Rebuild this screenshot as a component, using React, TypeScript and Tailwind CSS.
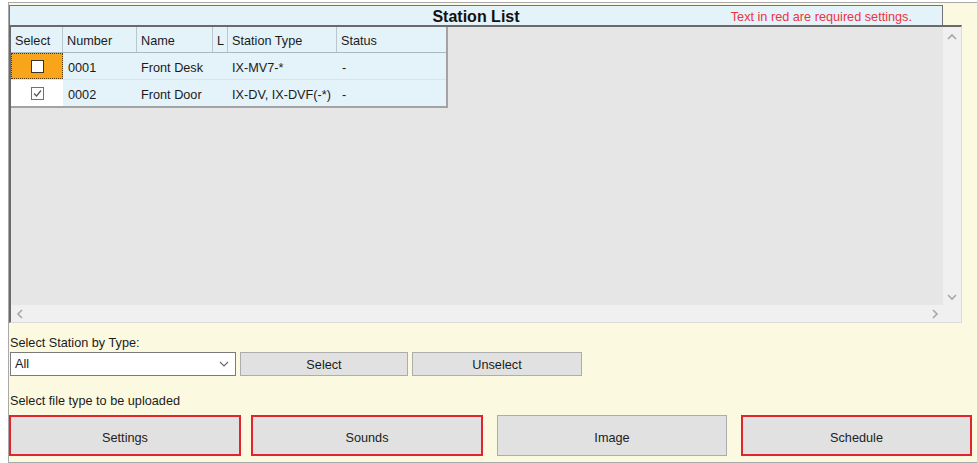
import React from "react";

const cols = [
  { key: "select", label: "Select", w: "w-[52px]" },
  { key: "number", label: "Number", w: "w-[74px]" },
  { key: "name", label: "Name", w: "w-[76px]" },
  { key: "loc", label: "L", w: "w-[15px]" },
  { key: "type", label: "Station Type", w: "w-[109px]" },
  { key: "status", label: "Status", w: "w-[109px]" },
];

const rows = [
  { number: "0001", name: "Front Desk", type: "IX-MV7-*", status: "-", checked: false, current: true },
  { number: "0002", name: "Front Door", type: "IX-DV, IX-DVF(-*)", status: "-", checked: true, current: false },
];

function Chevron({ dir }: { dir: "up" | "down" | "left" | "right" }) {
  const d =
    dir === "up"
      ? "M1 6 L5 2 L9 6"
      : dir === "down"
      ? "M1 2 L5 6 L9 2"
      : dir === "left"
      ? "M6 1 L2 5 L6 9"
      : "M2 1 L6 5 L2 9";
  const size = dir === "up" || dir === "down" ? "w-[10px] h-[8px]" : "w-[8px] h-[10px]";
  const vb = dir === "up" || dir === "down" ? "0 0 10 8" : "0 0 8 10";
  return (
    <svg viewBox={vb} className={size}>
      <path d={d} fill="none" stroke="#a6a6a6" strokeWidth="1.6" />
    </svg>
  );
}

function CheckBox({ checked, strong }: { checked: boolean; strong: boolean }) {
  return (
    <div
      className={`w-[13px] h-[13px] bg-white border flex items-center justify-center ${
        strong ? "border-[#333333]" : "border-[#707070]"
      }`}
    >
      {checked && (
        <svg viewBox="0 0 11 11" className="w-[11px] h-[11px]">
          <path d="M2 5.5 L4.5 8 L9 2.5" fill="none" stroke="#555555" strokeWidth="1.2" />
        </svg>
      )}
    </div>
  );
}

function BigButton({ label, required }: { label: string; required: boolean }) {
  return (
    <div
      className={`h-full flex items-center justify-center pt-[6px] bg-[#e1e1e1] text-[#222] ${
        required ? "border-2 border-[#e0252f]" : "border border-[#adadad]"
      }`}
    >
      {label}
    </div>
  );
}

export default function App() {
  return (
    <div className="w-[977px] h-[463px] bg-white pl-[8px] pt-[2px] font-['Liberation_Sans',Arial,sans-serif] text-[12.7px] text-[#1b1b1b] overflow-hidden">
      <div className="h-[461px] border-t border-l border-b border-[#a9a9a9] bg-[#fcf9e1] flex flex-col">
        {/* title band */}
        <div className="mt-[2px] w-[934px] h-[20px] border-t border-l border-r border-[#737373] bg-[#e4f2f9] grid grid-cols-[1fr_auto_1fr] items-center">
          <div />
          <div className="text-[16px] font-bold leading-[18px] pt-[2px] text-[#111]">Station List</div>
          <div className="justify-self-end pr-[30px] text-[#ee3340] leading-[14px] pt-[2px]">
            Text in red are required settings.
          </div>
        </div>

        {/* station grid */}
        <div className="w-[953px] h-[298px] border-t-2 border-l-2 border-[#6a6a6a] border-r border-b border-r-[#dadada] border-b-[#dadada] flex flex-col">
          <div className="flex flex-1 min-h-0">
            <div className="flex-1 bg-[#e6e6e6]">
              <div className="w-[437px] border-r-2 border-b-2 border-[#a3a3a3]">
                {/* header row */}
                <div className="flex h-[26px] bg-[#e4f2f9] border-b border-[#a9b9c2]">
                  {cols.map((c, i) => (
                    <div
                      key={c.key}
                      className={`${c.w} h-full flex items-center pt-[5px] overflow-hidden whitespace-nowrap pl-[4px] ${
                        i < cols.length - 1 ? "border-r border-[#b9c6cc]" : ""
                      }`}
                    >
                      {c.label}
                    </div>
                  ))}
                </div>
                {/* data rows */}
                {rows.map((r, idx) => (
                  <div
                    key={r.number}
                    className={`flex ${idx === 0 ? "h-[27px] border-b border-[#d6e6ee]" : "h-[26px]"} bg-[#e4f2f9]`}
                  >
                    <div
                      className={`w-[52px] h-full flex items-center justify-center ${
                        r.current
                          ? "bg-[#f8a51c] border border-dotted border-[#5a3a00]"
                          : "bg-white"
                      }`}
                    >
                      <CheckBox checked={r.checked} strong={r.current} />
                    </div>
                    <div className="w-[74px] pl-[5px] pt-[5px] flex items-center">{r.number}</div>
                    <div className="w-[76px] pl-[4px] pt-[5px] flex items-center">{r.name}</div>
                    <div className="w-[15px]" />
                    <div className="w-[109px] pl-[4px] pt-[5px] flex items-center whitespace-nowrap">{r.type}</div>
                    <div className="w-[109px] pl-[5px] pt-[5px] flex items-center">{r.status}</div>
                  </div>
                ))}
              </div>
            </div>
            <div className="w-[18px] bg-[#f0f0f0] flex flex-col items-center justify-between pt-[6px] pb-[4px]">
              <Chevron dir="up" />
              <Chevron dir="down" />
            </div>
          </div>
          <div className="h-[17px] flex bg-[#f0f0f0]">
            <div className="flex-1 flex items-center justify-between pl-[5px] pr-[22px]">
              <Chevron dir="left" />
              <Chevron dir="right" />
            </div>
          </div>
        </div>

        {/* type filter */}
        <div className="mt-[13px] h-[15px] leading-[15px] pl-[1px]">Select Station by Type:</div>
        <div className="mt-[1px] h-[24px] flex">
          <div className="ml-[1px] w-[226px] h-full bg-white border border-[#7a7a7a] flex items-center justify-between pl-[4px] pr-[6px]">
            <span className="pt-[2px]">All</span>
            <svg viewBox="0 0 10 6" className="w-[10px] h-[6px]">
              <path d="M1 1 L5 5 L9 1" fill="none" stroke="#6a6a6a" strokeWidth="1.2" />
            </svg>
          </div>
          <div className="ml-[4px] w-[168px] h-full pt-[3px] bg-[#e1e1e1] border border-[#adadad] flex items-center justify-center">
            Select
          </div>
          <div className="ml-[4px] w-[170px] h-full pt-[3px] bg-[#e1e1e1] border border-[#adadad] flex items-center justify-center">
            Unselect
          </div>
        </div>

        {/* upload file type */}
        <div className="mt-[18px] h-[15px] leading-[15px] pl-[1px]">Select file type to be uploaded</div>
        <div className="mt-[6px] h-[41px] flex">
          <div className="w-[232px]">
            <BigButton label="Settings" required />
          </div>
          <div className="ml-[10px] w-[232px]">
            <BigButton label="Sounds" required />
          </div>
          <div className="ml-[14px] w-[230px]">
            <BigButton label="Image" required={false} />
          </div>
          <div className="ml-[14px] w-[231px]">
            <BigButton label="Schedule" required />
          </div>
        </div>
      </div>
    </div>
  );
}
